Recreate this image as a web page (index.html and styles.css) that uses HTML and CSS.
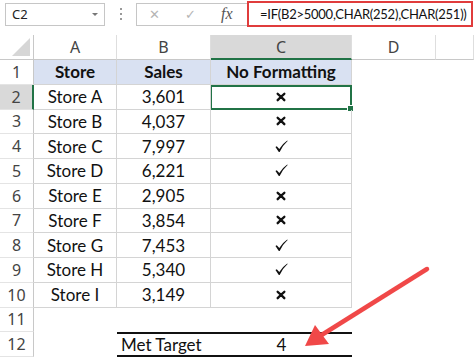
FILE: index.html
```html
<!DOCTYPE html>
<html>
<head>
  <meta charset="utf-8">
  <title>Met Target</title>
  <link rel="stylesheet" href="styles.css">
</head>
<body>
  <svg class="defs" width="0" height="0">
    <symbol id="cross" viewBox="0 0 12 12">
      <path d="M2 2.2 Q6 5.5 10 9.8 M10 2.2 Q6 5.5 2 9.8" fill="none" stroke="#111" stroke-width="2.8" stroke-linecap="round"/>
    </symbol>
    <symbol id="check" viewBox="0 0 14 14">
      <path d="M0.5 7.6 L1.9 6.6 L4.6 9.6 Q8 4.2 13.2 0.6 L13.6 1.1 Q8.6 5.4 5 13 L4.1 13 Z" fill="#111"/>
    </symbol>
  </svg>

  <div class="formula-bar">
    <div class="name-box">C2 <span class="caret"></span></div>
    <div class="grip"><i></i><i></i><i></i></div>
    <div class="fx-box">
      <span class="fx-cancel">✕</span>
      <span class="fx-enter">✓</span>
      <span class="fx-label">fx</span>
    </div>
    <div class="formula">=IF(B2&gt;5000,CHAR(252),CHAR(251))</div>
  </div>

  <div class="sheet">
    <div class="corner"></div>
    <div class="col-head">A</div>
    <div class="col-head">B</div>
    <div class="col-head active">C</div>
    <div class="col-head">D</div>
    <div class="col-head"></div>

    <div class="row-head">1</div>
    <div class="cell title">Store</div>
    <div class="cell title">Sales</div>
    <div class="cell title">No Formatting</div>
    <div class="rest"></div>

    <div class="row-head active">2</div>
    <div class="cell">Store A</div>
    <div class="cell">3,601</div>
    <div class="cell selected"><svg class="mark-x"><use href="#cross"/></svg><span class="handle"></span></div>
    <div class="rest"></div>

    <div class="row-head">3</div>
    <div class="cell">Store B</div>
    <div class="cell">4,037</div>
    <div class="cell"><svg class="mark-x"><use href="#cross"/></svg></div>
    <div class="rest"></div>

    <div class="row-head">4</div>
    <div class="cell">Store C</div>
    <div class="cell">7,997</div>
    <div class="cell"><svg class="mark-ok"><use href="#check"/></svg></div>
    <div class="rest"></div>

    <div class="row-head">5</div>
    <div class="cell">Store D</div>
    <div class="cell">6,221</div>
    <div class="cell"><svg class="mark-ok"><use href="#check"/></svg></div>
    <div class="rest"></div>

    <div class="row-head">6</div>
    <div class="cell">Store E</div>
    <div class="cell">2,905</div>
    <div class="cell"><svg class="mark-x"><use href="#cross"/></svg></div>
    <div class="rest"></div>

    <div class="row-head">7</div>
    <div class="cell">Store F</div>
    <div class="cell">3,854</div>
    <div class="cell"><svg class="mark-x"><use href="#cross"/></svg></div>
    <div class="rest"></div>

    <div class="row-head">8</div>
    <div class="cell">Store G</div>
    <div class="cell">7,453</div>
    <div class="cell"><svg class="mark-ok"><use href="#check"/></svg></div>
    <div class="rest"></div>

    <div class="row-head">9</div>
    <div class="cell">Store H</div>
    <div class="cell">5,340</div>
    <div class="cell"><svg class="mark-ok"><use href="#check"/></svg></div>
    <div class="rest"></div>

    <div class="row-head">10</div>
    <div class="cell">Store I</div>
    <div class="cell">3,149</div>
    <div class="cell"><svg class="mark-x"><use href="#cross"/></svg></div>
    <div class="rest"></div>

    <div class="row-head">11</div>
    <div class="blank"></div>
    <div class="blank"></div>
    <div class="blank"></div>
    <div class="rest"></div>

    <div class="row-head">12</div>
    <div class="blank"></div>
    <div class="total label">Met Target</div>
    <div class="total">4</div>
    <div class="rest"></div>
  </div>

  <!-- callout arrow pointing at the total -->
  <svg class="callout" width="474" height="364" viewBox="0 0 474 364">
    <line x1="427" y1="269" x2="320" y2="336" stroke="#f04848" stroke-width="4.5" stroke-linecap="round"/>
    <polygon points="305,346 315,325 329,344" fill="#f04848"/>
  </svg>
</body>
</html>
```

FILE: styles.css
```css
:root {
  --grid-line: #d4d4d4;
  --head-line: #c8c8c8;
  --head-sep: #dedede;
  --head-text: #444;
  --active-head: #d9d9d9;
  --excel-green: #217346;
  --title-bg: #d9e1f2;
  --callout: #f04848;
}

body {
  margin: 0;
  width: 474px;
  height: 364px;
  overflow: hidden;
  background: #fff;
  font-family: Lato, "Open Sans", sans-serif;
  color: #111;
}
.defs {
  position: absolute;
}

/* Formula bar */
.formula-bar {
  display: flex;
  align-items: center;
  height: 28px;
  padding-left: 5px;
  margin-bottom: 7px;
}
.name-box {
  box-sizing: border-box;
  width: 100px;
  height: 23px;
  border: 1px solid #c6c6c6;
  display: flex;
  align-items: center;
  justify-content: space-between;
  padding: 0 6px 0 6px;
  font-family: "Noto Sans", sans-serif;
  font-size: 13px;
  color: #222;
}
.caret {
  width: 0;
  height: 0;
  border-left: 3px solid transparent;
  border-right: 3px solid transparent;
  border-top: 3px solid #777;
}
.grip {
  width: 31px;
  display: flex;
  flex-direction: column;
  align-items: center;
  gap: 3px;
}
.grip i {
  width: 2px;
  height: 2px;
  background: #999;
}
.fx-box {
  box-sizing: border-box;
  width: 111px;
  height: 23px;
  border: 1px solid #c6c6c6;
  border-right: none;
  display: flex;
  align-items: center;
  padding-left: 12px;
  gap: 22px;
}
.fx-cancel,
.fx-enter {
  font-family: "DejaVu Sans", sans-serif;
  font-size: 13px;
  color: #b5b5b5;
  width: 14px;
}
.fx-label {
  font-family: "Liberation Serif", serif;
  font-style: italic;
  font-size: 16px;
  color: #555;
}
.formula {
  box-sizing: border-box;
  width: 226px;
  height: 26px;
  border: 2px solid #e03c3c;
  display: flex;
  align-items: center;
  padding-left: 11px;
  font-family: Lato, sans-serif;
  font-size: 13px;
  letter-spacing: -0.25px;
  color: #111;
  white-space: nowrap;
}

/* Sheet grid */
.sheet {
  display: grid;
  grid-template-columns: 34px 83px 94px 141px 84px 1fr;
  grid-template-rows: 25px repeat(12, 24.75px);
}
.sheet > div {
  box-sizing: border-box;
  display: flex;
  align-items: center;
  justify-content: center;
  position: relative;
}
.corner {
  border-right: 1px solid var(--head-line);
  border-bottom: 1px solid var(--head-line);
}
.corner::after {
  content: "";
  position: absolute;
  right: 3px;
  bottom: 3px;
  border-left: 18px solid transparent;
  border-bottom: 18px solid #d6d6d6;
}
.col-head {
  border-right: 1px solid var(--head-sep);
  border-bottom: 1px solid var(--head-line);
  font-family: "Noto Sans", sans-serif;
  font-size: 16px;
  color: var(--head-text);
}
.col-head.active {
  background: var(--active-head);
  border-bottom: 2px solid var(--excel-green);
}
.row-head {
  border-right: 1px solid var(--head-line);
  border-bottom: 1px solid #e4e4e4;
  font-family: "Noto Sans", sans-serif;
  font-size: 16px;
  color: var(--head-text);
}
.row-head.active {
  background: var(--active-head);
  border-right: 2px solid var(--excel-green);
}
.cell {
  border-right: 1px solid var(--grid-line);
  border-bottom: 1px solid var(--grid-line);
  font-size: 17px;
}
.cell.title {
  background: var(--title-bg);
  font-weight: bold;
}
.cell.selected {
  border: 2px solid var(--excel-green);
  border-left-width: 1px;
}
.handle {
  position: absolute;
  right: -4px;
  bottom: -4px;
  width: 5px;
  height: 5px;
  background: var(--excel-green);
  border: 1px solid #fff;
}
.rest {
  grid-column: span 2;
}
.total {
  border-top: 2px solid #111;
  border-bottom: 2px solid #111;
  font-size: 17px;
}
.total.label {
  justify-content: flex-start;
  padding-left: 4px;
}
.mark-x {
  width: 10px;
  height: 10px;
}
.mark-ok {
  width: 13px;
  height: 13px;
}
.callout {
  position: absolute;
  top: 0;
  left: 0;
  pointer-events: none;
}
```
